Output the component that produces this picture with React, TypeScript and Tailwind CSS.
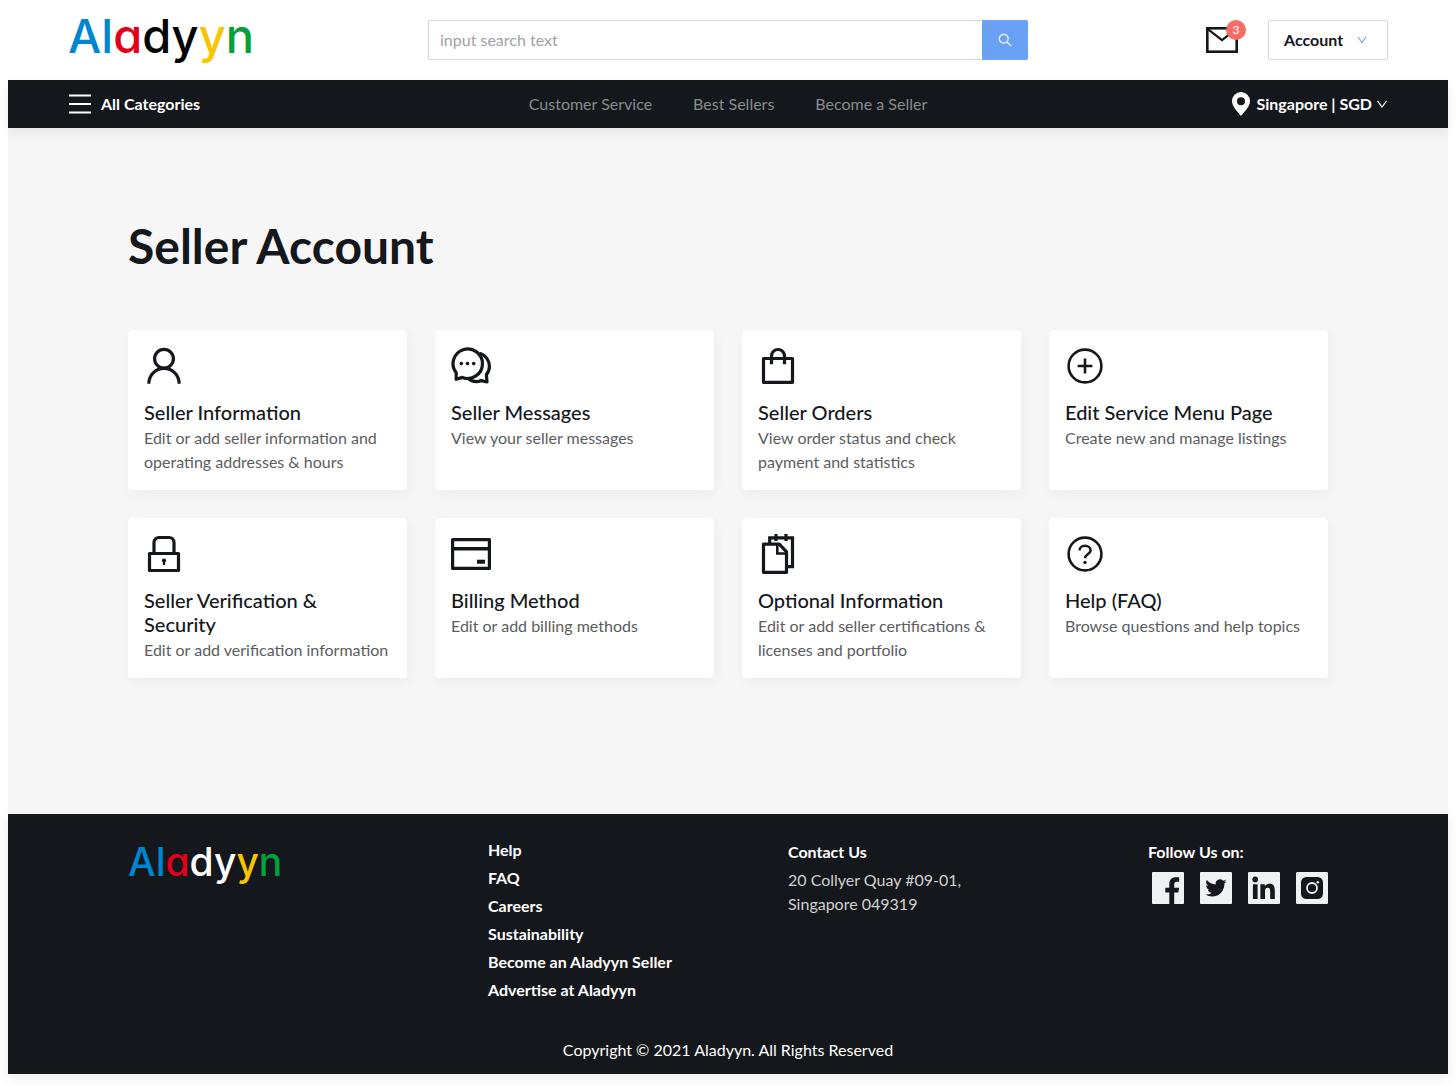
import type { ReactNode } from "react";

function Logo({ small = false }: { small?: boolean }) {
  return (
    <span
      className={
        small
          ? "block font-['Inter',sans-serif] text-[39px] leading-[48px] font-medium text-white [font-feature-settings:'cv11'_1]"
          : "block pb-2 font-['Inter',sans-serif] text-[47px] leading-[56px] font-medium text-black [font-feature-settings:'cv11'_1]"
      }
    >
      <span className="text-[#0086d1]">Al</span>
      <span className="text-[#e2001a]">a</span>dy
      <span className="text-[#f7c600]">y</span>
      <span className="text-[#00a13a]">n</span>
    </span>
  );
}

function CardIcon({ children }: { children: ReactNode }) {
  return (
    <svg
      aria-hidden="true"
      viewBox="0 0 40 40"
      className="size-10"
      fill="none"
      stroke="currentColor"
      strokeWidth="3.2"
    >
      {children}
    </svg>
  );
}

const cards: { title: string; text: string; icon: ReactNode }[] = [
  {
    title: "Seller Information",
    text: "Edit or add seller information and operating addresses & hours",
    icon: (
      <>
        <circle cx="20" cy="12.8" r="9.4" />
        <path d="M4.8 37.8C4.8 29 11.4 22.4 20 22.4S35.2 29 35.2 37.8" />
      </>
    ),
  },
  {
    title: "Seller Messages",
    text: "View your seller messages",
    icon: (
      <>
        <path d="M5.2 26.8A14.7 14.7 0 1 1 11.4 31.4L5.2 33.2z" strokeLinejoin="round" />
        <path
          d="M28.5 7.2C35 9 38.4 15 38.4 20.5C38.4 24 37.4 26.3 35.4 28.6L36 36L30.3 34.6C26 36.4 20.500 35.600 16.500 32"
          strokeLinejoin="round"
        />
        <g fill="currentColor" stroke="none">
          <circle cx="10.3" cy="17.6" r="1.8" />
          <circle cx="16.5" cy="17.6" r="1.8" />
          <circle cx="22.7" cy="17.6" r="1.8" />
        </g>
      </>
    ),
  },
  {
    title: "Seller Orders",
    text: "View order status and check payment and statistics",
    icon: (
      <>
        <path d="M5.5 12.5h29v23.8h-29z" strokeLinejoin="round" />
        <path d="M13.5 18.2V10a6.5 6.5 0 0 1 13 0v8.2" />
      </>
    ),
  },
  {
    title: "Edit Service Menu Page",
    text: "Create new and manage listings",
    icon: (
      <>
        <circle cx="20" cy="20" r="16.4" strokeWidth="2.6" />
        <path d="M20 12.6v14.8M12.6 20h14.8" strokeWidth="2.6" />
      </>
    ),
  },
  {
    title: "Seller Verification & Security",
    text: "Edit or add verification information",
    icon: (
      <>
        <path d="M5.5 19.5h29v17h-29z" strokeLinejoin="round" />
        <path d="M10 19.5V8.5a5 5 0 0 1 5-5h10a5 5 0 0 1 5 5v11" />
        <circle cx="20" cy="26.6" r="2.1" fill="currentColor" stroke="none" />
        <path d="M20 26v5" strokeWidth="2.2" />
      </>
    ),
  },
  {
    title: "Billing Method",
    text: "Edit or add billing methods",
    icon: (
      <>
        <path d="M1.6 5.6h36.8v28.800h-36.8z" strokeLinejoin="round" />
        <path d="M1.5 14.8h37" strokeWidth="3.6" />
        <path d="M26 27.7h8" strokeWidth="4" />
      </>
    ),
  },
  {
    title: "Optional Information",
    text: "Edit or add seller certifications & licenses and portfolio",
    icon: (
      <>
        <path d="M5.5 10.2h15.8l7.2 7.6v20.5h-23z" strokeLinejoin="round" />
        <path d="M19.3 10.2v9.3h9.2" strokeWidth="2.6" />
        <path d="M11.7 10.2V3.8h22.8v28.8h-6" />
        <path d="M18 0v7M28 0v7" />
      </>
    ),
  },
  {
    title: "Help (FAQ)",
    text: "Browse questions and help topics",
    icon: (
      <>
        <circle cx="20" cy="20" r="16.4" strokeWidth="2.6" />
        <path
          d="M14.6 16.4C14.6 13.4 17 11.7 20 11.7S25.6 13.6 25.6 16.4C25.6 19.7 20 20.2 20 24.2"
          strokeWidth="2.5"
        />
        <circle cx="20" cy="28.4" r="1.7" fill="currentColor" stroke="none" />
      </>
    ),
  },
];

const footerLinks = [
  "Help",
  "FAQ",
  "Careers",
  "Sustainability",
  "Become an Aladyyn Seller",
  "Advertise at Aladyyn",
];

const socials: { name: string; mark: ReactNode }[] = [
  {
    name: "Facebook",
    mark: (
      <path d="M17.3 32V20.4h-4v-4.600h4v-3.5c0-4.6 2.5-7 6.6-7h3.3v4.5h-2.400c-2 0-2.6 1-2.6 2.7v3.3h4.9l-.7 4.6h-4.2V32z" />
    ),
  },
  {
    name: "Twitter",
    mark: (
      <path
        transform="translate(5.4 5.3) scale(.88)"
        d="M23.95 4.57a10 10 0 0 1-2.82.78 4.96 4.96 0 0 0 2.16-2.73c-.95.56-2 .96-3.13 1.18a4.92 4.92 0 0 0-8.38 4.48C7.69 8.1 4.07 6.13 1.64 3.16a4.93 4.93 0 0 0 1.52 6.57 4.9 4.9 0 0 1-2.23-.61v.06a4.92 4.92 0 0 0 3.95 4.83 5 5 0 0 1-2.21.08 4.94 4.94 0 0 0 4.6 3.42A9.87 9.87 0 0 1 0 19.54a13.99 13.99 0 0 0 7.55 2.21c9.05 0 14-7.5 14-13.98 0-.21 0-.42-.02-.63a9.94 9.94 0 0 0 2.46-2.55z"
      />
    ),
  },
  {
    name: "LinkedIn",
    mark: (
      <>
        <circle cx="7.2" cy="7.4" r="2.8" />
        <path d="M4.9 12.2h4.7V27H4.9zM12.4 12.2h4.4v2c.9-1.5 2.6-2.4 4.6-2.4 4.3 0 5.4 2.7 5.4 6.7V27h-4.6v-7.5c0-1.9-.2-3.7-2.5-3.7s-2.7 1.7-2.7 3.6V27h-4.6z" />
      </>
    ),
  },
  {
    name: "Instagram",
    mark: (
      <>
        <rect x="5" y="5" width="22" height="22" rx="5.5" />
        <circle cx="16" cy="16" r="5" fill="none" stroke="#f0f1f3" strokeWidth="1.8" />
        <circle cx="21.8" cy="10.2" r="1.2" fill="#f0f1f3" />
      </>
    ),
  },
];

export default function App() {
  return (
    <div className="bg-white px-2 pb-3 font-['Lato',sans-serif] text-base leading-6 text-[#14171b]">
      <header>
        <div className="grid h-20 grid-cols-[1fr_600px_1fr] items-center px-15">
          <a href="#home" aria-label="Aladyyn home" className="justify-self-start">
            <Logo />
          </a>
          <form role="search" className="flex h-10" onSubmit={(e) => e.preventDefault()}>
            <input
              type="search"
              aria-label="Search"
              placeholder="input search text"
              className="min-w-0 flex-1 rounded-l-xs border border-r-0 border-[#d5d8de] px-[11px] outline-none placeholder:text-[#a0a3a8]"
            />
            <button
              type="submit"
              aria-label="Search"
              className="flex w-[46px] items-center justify-center rounded-r-xs bg-[#6aa1f4] text-white"
            >
              <svg viewBox="0 0 14 14" className="size-3.5" fill="none" stroke="currentColor" strokeWidth="1.2">
                <circle cx="5.8" cy="5.8" r="4.4" />
                <path d="M9 9l4.2 4.2" />
              </svg>
            </button>
          </form>
          <div className="flex items-center justify-end gap-[30px]">
            <button type="button" aria-label="Messages, 3 unread" className="relative flex h-10 items-center">
              <svg viewBox="0 0 32 26" className="h-[26px] w-8" fill="none" stroke="currentColor">
                <rect x="1.3" y="1.3" width="29.4" height="23.4" strokeWidth="2.6" />
                <path d="M1.8 2.2L16 13.2L30.2 2.2" strokeWidth="2.2" />
              </svg>
              <span className="absolute top-0 -right-2 flex size-5 items-center justify-center rounded-full bg-[#f56c64] text-xs text-white">
                3
              </span>
            </button>
            <button
              type="button"
              className="flex h-10 w-[120px] items-center gap-3.5 rounded-xs border border-[#d5d8de] pl-[15px] font-bold"
            >
              Account
              <svg viewBox="0 0 10 8" className="h-2 w-2.5" fill="none" stroke="#6aa1f4" strokeWidth="1.2">
                <path d="M1 1l4 5.5L9 1" />
              </svg>
            </button>
          </div>
        </div>
        <nav className="relative grid h-12 grid-cols-[1fr_auto_1fr] items-center bg-[#14171b] px-15 shadow-[0_4px_12px_rgba(20,23,28,0.08)]">
          <button type="button" className="flex items-center gap-2.5 justify-self-start pl-px font-bold text-white">
            <svg viewBox="0 0 22 20" className="h-5 w-[22px]" stroke="currentColor" strokeWidth="2">
              <path d="M0 1.5h22M0 10h22M0 18.5h22" />
            </svg>
            All Categories
          </button>
          <div className="flex gap-[41px] text-[#898b8e]">
            <a href="#service">Customer Service</a>
            <a href="#best">Best Sellers</a>
            <a href="#become">Become a Seller</a>
          </div>
          <button type="button" className="flex items-center justify-self-end font-bold text-white">
            <svg viewBox="0 0 18 24" className="mr-[7px] h-6 w-[18px]" fill="currentColor">
              <path
                fillRule="evenodd"
                d="M9 0a9 9 0 0 0-9 9c0 6 6 11 9 15c3-4 9-9 9-15a9 9 0 0 0-9-9zm0 5.2a4 4 0 1 1 0 8a4 4 0 0 1 0-8z"
              />
            </svg>
            Singapore | SGD
            <svg viewBox="0 0 12 8" className="ml-1 h-2 w-3" fill="none" stroke="currentColor" strokeWidth="1.2">
              <path d="M1.5 .8L6 7L10.500 .8" />
            </svg>
          </button>
        </nav>
      </header>

      <main className="bg-[#f6f6f6] px-30 pt-22 pb-34">
        <h1 className="mb-[54px] text-5xl leading-[60px] font-bold">Seller Account</h1>
        <div className="grid grid-cols-4 gap-7">
          {cards.map((c) => (
            <a
              key={c.title}
              href="#account"
              className="block rounded-sm bg-white p-4 shadow-[2px_4px_12px_rgba(20,23,28,0.04)]"
            >
              <CardIcon>{c.icon}</CardIcon>
              <h2 className="mt-3.5 mb-0.5 text-xl leading-6 font-medium">{c.title}</h2>
              <p className="text-[#5b5d60]">{c.text}</p>
            </a>
          ))}
        </div>
      </main>

      <footer className="bg-[#14171b] px-30 pt-6 pb-3 text-white shadow-[0_4px_12px_rgba(20,23,28,0.08)]">
        <div className="grid grid-cols-[6fr_5fr_6fr_3fr]">
          <a href="#home" aria-label="Aladyyn home" className="justify-self-start">
            <Logo small />
          </a>
          <ul className="flex flex-col gap-1 font-bold">
            {footerLinks.map((l) => (
              <li key={l}>
                <a href="#info">{l}</a>
              </li>
            ))}
          </ul>
          <div className="pt-0.5">
            <h3 className="font-bold">Contact Us</h3>
            <address className="mt-1 text-[#d0d1d2] not-italic">
              20 Collyer Quay #09-01,
              <br />
              Singapore 049319
            </address>
          </div>
          <div className="pt-0.5">
            <h3 className="font-bold">Follow Us on:</h3>
            <div className="mt-2 flex justify-end gap-4">
              {socials.map((s) => (
                <a key={s.name} href="#social" aria-label={s.name}>
                  <svg viewBox="0 0 32 32" className="size-8 rounded-[1px] bg-[#f0f1f3]" fill="#14171b">
                    {s.mark}
                  </svg>
                </a>
              ))}
            </div>
          </div>
        </div>
        <p className="mt-9 text-center">Copyright © 2021 Aladyyn. All Rights Reserved</p>
      </footer>
    </div>
  );
}
